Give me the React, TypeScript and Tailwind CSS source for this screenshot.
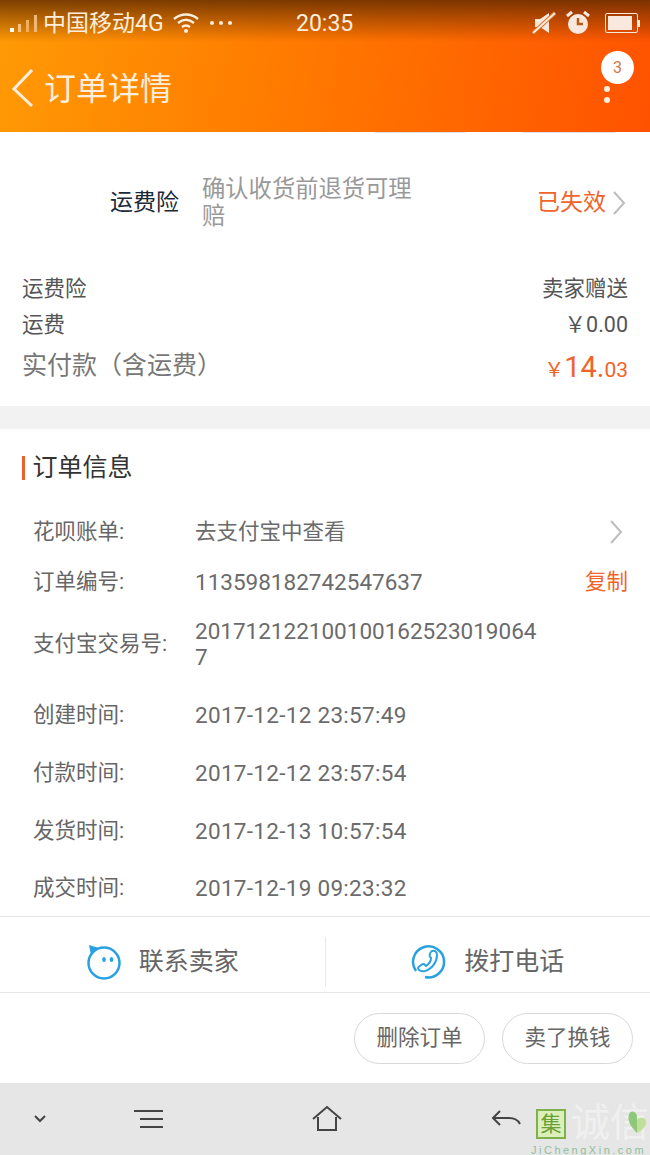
import type { ReactNode } from "react";

const font = { fontFamily: '"Roboto", "Noto Sans CJK SC", "Noto Sans", sans-serif' };

function Chevron() {
  return (
    <svg width="14" height="26" viewBox="0 0 14 26" fill="none" stroke="#bdbdbd" strokeWidth="2">
      <path d="M2 2l10 11L2 24" />
    </svg>
  );
}

function StatusBar() {
  return (
    <div className="flex h-[46px] items-center text-[#fdeedd]">
      <svg width="30" height="28" viewBox="0 0 30 28" className="ml-[9px]">
        <rect x="1" y="19" width="4" height="4" fill="#fff" />
        <rect x="9" y="15" width="3" height="8" fill="#f5c07c" />
        <rect x="17" y="11" width="3" height="12" fill="#f0b060" />
        <rect x="25" y="6" width="3" height="17" fill="#eeb878" />
      </svg>
      <span className="ml-[4px] w-[125px] whitespace-nowrap text-[23px] leading-none">中国移动4G</span>
      <svg width="28" height="24" viewBox="0 0 28 24" className="ml-[4px]" fill="none" stroke="#fdeedd" strokeWidth="2.4">
        <path d="M2 8c7-6 17-6 24 0" />
        <path d="M6 12c5-4 11-4 16 0" />
        <path d="M10 16c2.500-2 5.500-2 8 0" />
        <circle cx="14" cy="20" r="2" fill="#fdeedd" stroke="none" />
      </svg>
      <div className="ml-[10px] flex gap-[5px]">
        <span className="h-1 w-1 rounded-full bg-[#fdeedd]" />
        <span className="h-1 w-1 rounded-full bg-[#fdeedd]" />
        <span className="h-1 w-1 rounded-full bg-[#fdeedd]" />
      </div>
      <span className="ml-[64px] text-[23px] leading-none">20:35</span>
      <svg width="24" height="24" viewBox="0 0 24 24" className="ml-auto" fill="#f8e8de">
        <path d="M3 8h5l9-6v20l-9-6H3z" />
        <path d="M1 22L23 2" stroke="#e07020" strokeWidth="4" />
        <path d="M1 22L23 2" stroke="#f8e8de" strokeWidth="2" />
      </svg>
      <svg width="26" height="26" viewBox="0 0 26 26" className="ml-[9px]">
        <circle cx="13" cy="14" r="10" fill="#f8e8de" />
        <path d="M2 6l5-4M24 6l-5-4" stroke="#f8e8de" strokeWidth="3" />
        <path d="M13 8v6h5" fill="none" stroke="#b85a10" strokeWidth="2.500" />
      </svg>
      <div className="ml-[14px] mr-[10px] flex items-center">
        <div className="h-[20px] w-[33px] rounded-[2px] border border-[#f8e8de] p-[2px]">
          <div className="h-full w-[24px] bg-[#f8e8de]" />
        </div>
        <div className="h-[7px] w-[2px] bg-[#f8e8de]" />
      </div>
    </div>
  );
}

function Header() {
  return (
    <div className="h-[132px] shrink-0 bg-[linear-gradient(180deg,rgba(90,40,0,0.8)_0px,rgba(90,40,0,0)_42px),linear-gradient(100deg,#ff9a05_0%,#ff7a00_45%,#ff5200_100%)]">
      <StatusBar />
      <div className="relative flex h-[86px] items-start">
        <svg width="24" height="40" viewBox="0 0 24 40" className="ml-[11px] mt-[22px]" fill="none" stroke="#fdeedd" strokeWidth="3">
          <path d="M21 2L3 21l18 17" />
        </svg>
        <span className="ml-[9px] mt-[23px] text-[32px] leading-[40px] text-[#fdeedd]">订单详情</span>
        <div className="absolute left-[601px] top-[5px] flex h-[33px] w-[33px] items-center justify-center rounded-full bg-white text-[16px] text-[#d2764a]">3</div>
        <span className="absolute left-[604px] top-[40px] h-[6px] w-[6px] rounded-full bg-[#fdeedd]" />
        <span className="absolute left-[604px] top-[51px] h-[6px] w-[6px] rounded-full bg-[#fdeedd]" />
      </div>
    </div>
  );
}

function InfoRow({ label, value, h, mono, action }: { label: string; value: string; h: string; mono?: string; action?: ReactNode }) {
  return (
    <div className={`flex shrink-0 items-center ${h}`}>
      <span className="w-[162px] shrink-0 whitespace-nowrap pl-[33px] text-[21.500px] text-[#666]">{label}</span>
      <span className={`ml-[33px] w-[345px] shrink-0 break-all leading-[26px] text-[#6b6b6b] ${mono ?? "text-[21.500px]"}`}>{value}</span>
      {action}
    </div>
  );
}

const dateText = "text-[22.500px] tracking-[0.3px]";

export default function App() {
  return (
    <div className="flex h-[1155px] w-[650px] flex-col overflow-hidden bg-white" style={font}>
      <Header />

      <div className="relative flex h-[139px] shrink-0 items-center overflow-hidden pt-[3px]">
        <span className="absolute left-[372px] top-[-7px] h-[8px] w-[96px] rounded-[4px] border border-[#e2e2e2]" />
        <span className="absolute left-[520px] top-[-7px] h-[8px] w-[98px] rounded-[4px] border border-[#e2e2e2]" />
        <span className="ml-[110px] text-[23px] text-[#1c2a38]">运费险</span>
        <span className="ml-[23px] w-[220px] text-[23.300px] leading-[27px] text-[#999]">确认收货前退货可理赔</span>
        <span className="ml-auto text-[23px] text-[#f0642a]">已失效</span>
        <div className="ml-[6px] mr-[24px] flex items-center">
          <Chevron />
        </div>
      </div>

      <div className="shrink-0 px-[22px]">
        <div className="flex h-[36px] items-center justify-between text-[21.500px] text-[#555]">
          <span>运费险</span>
          <span>卖家赠送</span>
        </div>
        <div className="flex h-[36px] items-center justify-between text-[21.500px] text-[#555]">
          <span>运费</span>
          <span>￥0.00</span>
        </div>
        <div className="flex h-[46px] items-center justify-between">
          <span className="text-[25px] text-[#777]">实付款（含运费）</span>
          <span className="pt-[4px] text-[#f0642a]">
            <span className="text-[20px]">￥</span>
            <span className="text-[29px]">14.</span>
            <span className="text-[21px]">03</span>
          </span>
        </div>
      </div>

      <div className="mt-[17px] h-[23px] shrink-0 bg-[#f2f2f2]" />

      <div className="flex h-[78px] shrink-0 items-center pl-[22px]">
        <span className="h-[24px] w-[2.500px] bg-[#e8622a]" />
        <span className="ml-[8px] text-[25px] text-[#333]">订单信息</span>
      </div>

      <InfoRow label="花呗账单:" value="去支付宝中查看" h="h-[50px]" action={<div className="ml-[69px]"><Chevron /></div>} />
      <InfoRow label="订单编号:" value="113598182742547637" mono="text-[22.500px]" h="h-[50px]" action={<span className="ml-[45px] text-[21.500px] text-[#f0642a]">复制</span>} />
      <InfoRow label="支付宝交易号:" value="2017121221001001625230190647" mono="text-[22.500px]" h="h-[74px] mb-[5px]" />
      <InfoRow label="创建时间:" value="2017-12-12 23:57:49" mono={dateText} h="h-[58px]" />
      <InfoRow label="付款时间:" value="2017-12-12 23:57:54" mono={dateText} h="h-[58px]" />
      <InfoRow label="发货时间:" value="2017-12-13 10:57:54" mono={dateText} h="h-[58px]" />
      <InfoRow label="成交时间:" value="2017-12-19 09:23:32" mono={dateText} h="h-[56px]" />

      <div className="flex h-[77px] shrink-0 items-end border-y border-[#e5e5e5] pb-[5px]">
        <div className="flex h-[50px] flex-1 items-center justify-center gap-[17px] border-r border-[#e8e8e8]">
          <svg width="36" height="36" viewBox="0 0 36 36" fill="none">
            <circle cx="18" cy="19" r="15.500" stroke="#29a1e0" strokeWidth="2.500" />
            <path d="M3 1l10 3-8 7z" fill="#29a1e0" />
            <ellipse cx="18" cy="15.500" rx="1.800" ry="2.600" fill="#29a1e0" />
            <ellipse cx="25.500" cy="15.500" rx="1.800" ry="2.600" fill="#29a1e0" />
          </svg>
          <span className="text-[25px] text-[#666]">联系卖家</span>
        </div>
        <div className="flex h-[50px] flex-1 items-center justify-center gap-[17px]">
          <svg width="36" height="36" viewBox="0 0 36 36" fill="none" stroke="#29a1e0" strokeWidth="2.500">
            <path d="M5 27A15.500 15.500 0 1 1 14 33" />
            <path d="M21 7c3-1 5 1 5 4 0 7-5 14-12 16-4 1-7-1-7-3 1-2 4-4 6-4l2 2c3-2 5-5 5-8-2-1-2-5 1-7z" strokeWidth="2" />
          </svg>
          <span className="text-[25px] text-[#666]">拨打电话</span>
        </div>
      </div>

      <div className="flex h-[90px] shrink-0 items-center justify-end gap-[17px] pr-[17px]">
        <div className="flex h-[51px] w-[131px] items-center justify-center rounded-full border border-[#d8d8d8] text-[21.500px] text-[#666]">删除订单</div>
        <div className="flex h-[51px] w-[131px] items-center justify-center rounded-full border border-[#d8d8d8] text-[21.500px] text-[#666]">卖了换钱</div>
      </div>

      <div className="relative flex flex-1 items-center bg-[#e6e6e6] text-[#444]">
        <svg width="16" height="10" viewBox="0 0 16 10" className="ml-[32px]" fill="none" stroke="#444" strokeWidth="2"><path d="M3 2l5 5 5-5" /></svg>
        <svg width="30" height="20" viewBox="0 0 30 20" className="ml-[85px]" fill="none" stroke="#444" strokeWidth="2"><path d="M1 2h29M7 10h23M7 18h23" /></svg>
        <svg width="30" height="28" viewBox="0 0 30 28" className="ml-[149px]" fill="none" stroke="#444" strokeWidth="2"><path d="M1 14L15 2l14 12M6 12v13h18V12" /></svg>
        <svg width="30" height="20" viewBox="0 0 30 20" className="ml-[149px]" fill="none" stroke="#444" strokeWidth="2"><path d="M9 2L2 9l7 7M2 9h16c6 0 9 2 11 6" /></svg>
        <div className="absolute left-[536px] top-[26px] flex h-[30px] w-[30px] items-center justify-center border-2 border-[#7fb24d] bg-[#dcefb8] text-[21px] leading-none text-[#6aa03a]">集</div>
        <span className="absolute left-[571px] top-[18px] text-[39px] leading-[44px] text-[#f0f0f0]">诚信</span>
        <svg width="22" height="30" viewBox="0 0 22 30" className="absolute left-[626px] top-[26px]">
          <path d="M11 24C5 18 1 12 3 5c2-4 7-3 8 2z" fill="#8fc878" />
          <path d="M11 24c6-3 10-8 9-12-1-4-7-4-9-1z" fill="#bfe09a" />
        </svg>
        <span className="absolute left-[531px] top-[59px] text-[11px] tracking-[2.500px] text-[#8fbf9a]" style={{ fontFamily: '"Liberation Sans", sans-serif' }}>JiChengXin.com</span>
      </div>
    </div>
  );
}
